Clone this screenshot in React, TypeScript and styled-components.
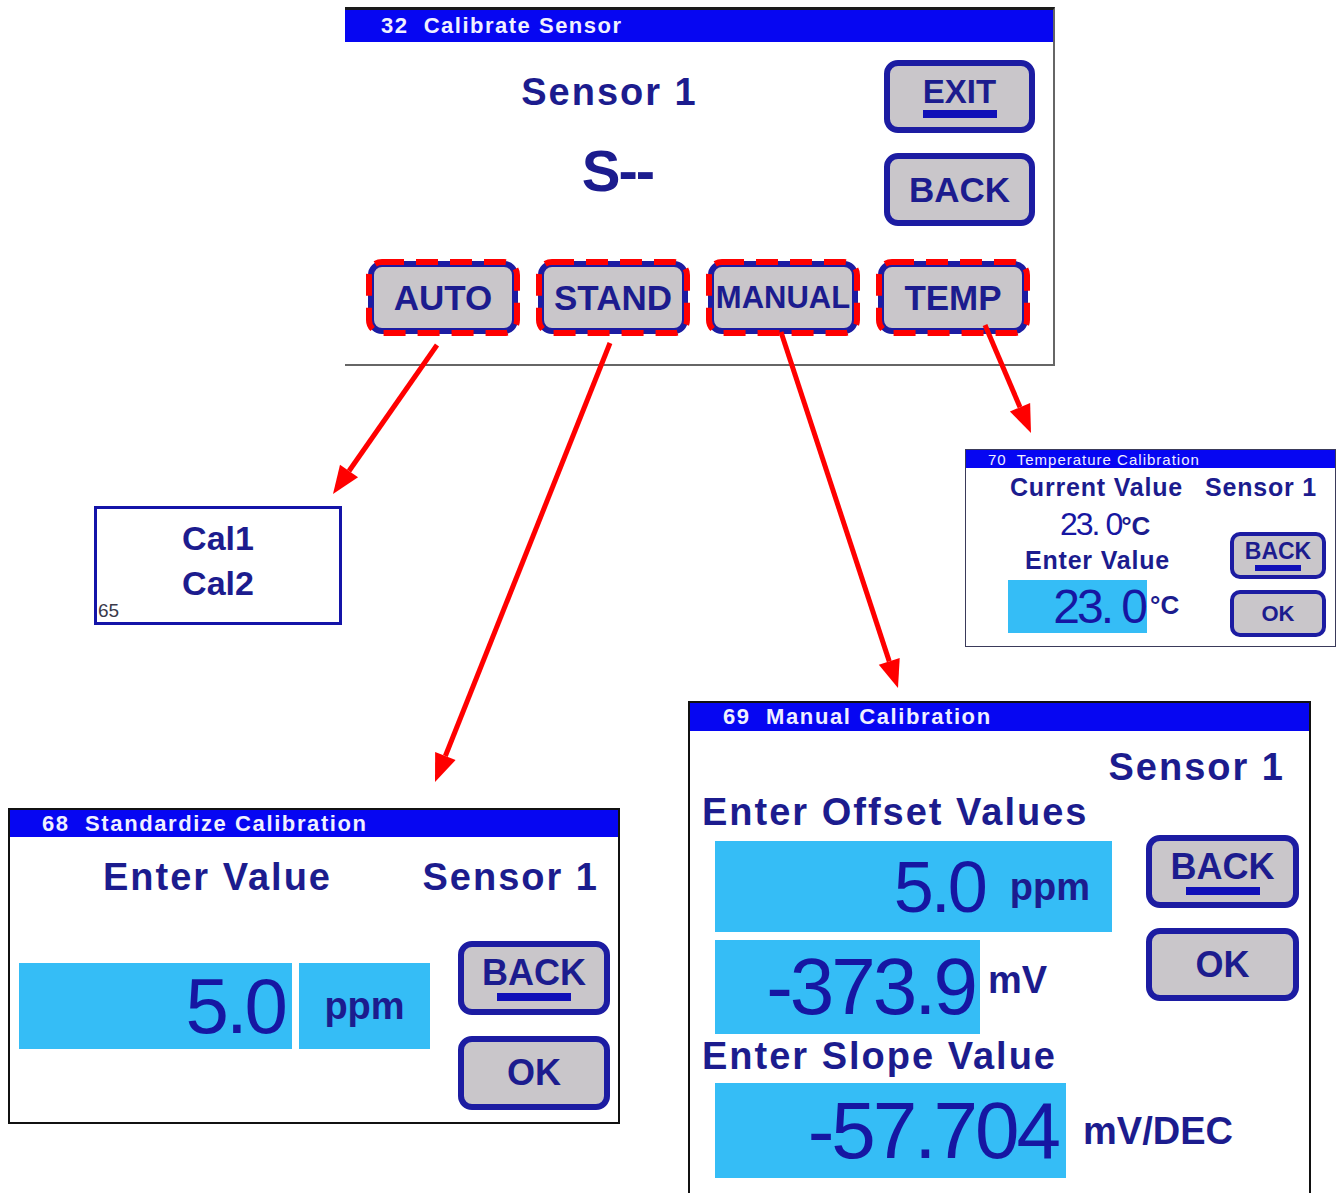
import React from 'react'
import styled, { createGlobalStyle } from 'styled-components'

const NAVY = '#1c1c8e'
const DIGIT = '#1616a2'
const BAR = '#0606f2'
const CYAN = '#35bdf6'
const KEY_EDGE = '#1c1ca2'
const KEY_FACE = '#c9c6ca'

const GlobalStyle = createGlobalStyle`
  html, body { margin: 0; padding: 0; background: #fff; }
  body { font-family: 'Liberation Sans', Arial, sans-serif; color: ${NAVY}; }
`

const Canvas = styled.div`
  position: relative;
  width: 1336px;
  height: 1193px;
  overflow: hidden;
  background: #fff;
`

// each screen is a node of the diagram, placed where it sits on the sheet
const Screen = styled.section<{ $x: number; $y: number; $w: number; $h: number }>`
  position: absolute;
  left: ${(p) => p.$x}px;
  top: ${(p) => p.$y}px;
  width: ${(p) => p.$w}px;
  height: ${(p) => p.$h}px;
  box-sizing: border-box;
  display: flex;
  flex-direction: column;
  background: #fff;
`

const MainScreen = styled(Screen)`
  border-top: 3px solid #1a1a1a;
  border-right: 2px solid #666;
  border-bottom: 2px solid #666;
`

const CalScreen = styled(Screen)`
  border: 3px solid #1414a8;
  align-items: center;
  padding-top: 7px;
`

const TempScreen = styled(Screen)`
  border: 1px solid #3a3a5a;
`

const BoxedScreen = styled(Screen)<{ $open?: boolean }>`
  border: 2px solid #111;
  border-bottom: ${(p) => (p.$open ? 'none' : '2px solid #111')};
`

const TitleBar = styled.header<{ $h: number; $fs: number; $pad: number; $ls: number; $bold?: boolean }>`
  flex: none;
  height: ${(p) => p.$h}px;
  background: ${BAR};
  color: #f0f0ff;
  font-size: ${(p) => p.$fs}px;
  font-weight: ${(p) => (p.$bold ? 700 : 400)};
  letter-spacing: ${(p) => p.$ls}px;
  padding-left: ${(p) => p.$pad}px;
  display: flex;
  align-items: center;
  white-space: pre;
  line-height: 1;
`

const Label = styled.div<{ $fs: number; $ls?: number }>`
  font-weight: 700;
  font-size: ${(p) => p.$fs}px;
  letter-spacing: ${(p) => p.$ls ?? 0}px;
  line-height: 1;
  white-space: nowrap;
`

const Readout = styled.span<{ $fs: number; $ls?: number }>`
  font-weight: 400;
  font-size: ${(p) => p.$fs}px;
  letter-spacing: ${(p) => p.$ls ?? -3}px;
  line-height: 1;
  white-space: pre;
  color: ${DIGIT};
`

const Key = styled.div<{ $w: number; $h: number; $fs: number; $edge?: number }>`
  position: relative;
  flex: none;
  width: ${(p) => p.$w}px;
  height: ${(p) => p.$h}px;
  box-sizing: border-box;
  border: ${(p) => p.$edge ?? 6}px solid ${KEY_EDGE};
  border-radius: ${(p) => ((p.$edge ?? 6) > 4 ? 14 : 10)}px;
  background: ${KEY_FACE};
  display: flex;
  flex-direction: column;
  align-items: center;
  justify-content: center;
  font-weight: 700;
  font-size: ${(p) => p.$fs}px;
  line-height: 1;
  color: ${NAVY};
  white-space: nowrap;
`

const Underline = styled.span<{ $w: number; $h?: number }>`
  display: block;
  width: ${(p) => p.$w}px;
  height: ${(p) => p.$h ?? 8}px;
  margin-top: 2px;
  background: #1010b8;
`

const KeyStack = styled.div<{ $gap: number; $top?: number }>`
  display: flex;
  flex-direction: column;
  gap: ${(p) => p.$gap}px;
  margin-left: auto;
  margin-top: ${(p) => p.$top ?? 0}px;
`

const DashOverlay = styled.svg`
  position: absolute;
  left: -9px;
  top: -9px;
  overflow: visible;
  pointer-events: none;
`

const Highlight = ({ w, h }: { w: number; h: number }) => (
  <DashOverlay width={w + 6} height={h + 6}>
    <rect
      x={4}
      y={4}
      width={w - 2}
      height={h - 2}
      rx={13}
      fill='none'
      stroke='#ff0000'
      strokeWidth={6}
      strokeDasharray='22 12'
    />
  </DashOverlay>
)

/* ---------- 32 Calibrate Sensor ---------- */

const MainBody = styled.div`
  display: flex;
  flex-direction: column;
  padding: 18px 18px 0 0;
`

const MainTop = styled.div`
  display: flex;
`

const CenterCol = styled.div`
  flex: 1;
  display: flex;
  flex-direction: column;
  align-items: center;
  padding-top: 13px;
  gap: 31px;
`

const SensorTitle = styled(Label)`
  margin-right: 10px;
`

const Mode = styled.div`
  font-weight: 700;
  font-size: 58px;
  letter-spacing: -2px;
  line-height: 1;
  margin-left: 6px;
`

const KeyRow = styled.div`
  display: flex;
  gap: 20px;
  margin-top: 35px;
  padding-left: 23px;
`

/* ---------- 65 auto ---------- */

const CalLine = styled(Label)`
  font-size: 34px;
  line-height: 45px;
`

const ScreenId = styled.span`
  position: absolute;
  left: 1px;
  bottom: 2px;
  font-size: 19px;
  line-height: 1;
  color: #3a3a4a;
`

/* ---------- 70 Temperature ---------- */

const HeaderRow = styled.div<{ $top: number; $left: number; $right?: number; $gap?: number }>`
  display: flex;
  justify-content: ${(p) => (p.$gap ? 'flex-start' : 'space-between')};
  gap: ${(p) => p.$gap ?? 0}px;
  margin-top: ${(p) => p.$top}px;
  padding-left: ${(p) => p.$left}px;
  padding-right: ${(p) => p.$right ?? 0}px;
`

const TempMain = styled.div`
  display: flex;
  padding-right: 9px;
`

const TempLeft = styled.div`
  display: flex;
  flex-direction: column;
  align-items: flex-start;
`

const Reading = styled.div`
  display: flex;
  align-items: baseline;
  margin: 8px 0 0 94px;
`

const Unit = styled.span<{ $fs: number }>`
  font-weight: 700;
  font-size: ${(p) => p.$fs}px;
  line-height: 1;
  white-space: nowrap;
`

const EntryRow = styled.div<{ $top: number; $left: number }>`
  display: flex;
  align-items: flex-start;
  margin-top: ${(p) => p.$top}px;
  margin-left: ${(p) => p.$left}px;
`

const Field = styled.div<{ $w: number; $h: number; $pad?: number; $center?: boolean }>`
  flex: none;
  width: ${(p) => p.$w}px;
  height: ${(p) => p.$h}px;
  box-sizing: border-box;
  background: ${CYAN};
  display: flex;
  align-items: center;
  justify-content: ${(p) => (p.$center ? 'center' : 'flex-end')};
  padding-right: ${(p) => p.$pad ?? 0}px;
  color: ${NAVY};
`

/* ---------- 68 Standardize ---------- */

const StdMain = styled.div`
  display: flex;
  align-items: flex-start;
  margin-top: 45px;
  padding: 0 8px 0 9px;
`

const FieldGroup = styled.div`
  display: flex;
  gap: 7px;
  margin-top: 22px;
`

/* ---------- 69 Manual ---------- */

const ManualBody = styled.div`
  display: flex;
  flex-direction: column;
  padding: 0 10px 0 12px;
`

const SensorLine = styled(Label)`
  align-self: flex-end;
  margin-top: 17px;
  padding-right: 14px;
`

const Heading = styled(Label)<{ $top: number }>`
  margin-top: ${(p) => p.$top}px;
`

const ManualMain = styled.div`
  display: flex;
  margin-top: 4px;
`

const ManualLeft = styled.div`
  flex: none;
  width: 420px;
  display: flex;
  flex-direction: column;
  padding-top: 6px;
`

const SideUnit = styled(Unit)<{ $left: number; $top?: number }>`
  margin-left: ${(p) => p.$left}px;
  align-self: ${(p) => (p.$top === undefined ? 'center' : 'flex-start')};
  margin-top: ${(p) => p.$top ?? 0}px;
`

/* ---------- arrows ---------- */

const ArrowLayer = styled.svg`
  position: absolute;
  left: 0;
  top: 0;
  pointer-events: none;
`

const arrows = [
  { x1: 437, y1: 345, x2: 333, y2: 494 },
  { x1: 610, y1: 343, x2: 435, y2: 782 },
  { x1: 781, y1: 332, x2: 898, y2: 688 },
  { x1: 985, y1: 325, x2: 1031, y2: 433 },
]

const Arrow = ({ x1, y1, x2, y2 }: { x1: number; y1: number; x2: number; y2: number }) => {
  const a = Math.atan2(y2 - y1, x2 - x1)
  const len = 28
  const half = 11
  const bx = x2 - len * Math.cos(a)
  const by = y2 - len * Math.sin(a)
  const px = -Math.sin(a) * half
  const py = Math.cos(a) * half
  return (
    <g>
      <line x1={x1} y1={y1} x2={bx} y2={by} stroke='#ff0000' strokeWidth={5} />
      <polygon
        points={`${x2},${y2} ${bx + px},${by + py} ${bx - px},${by - py}`}
        fill='#ff0000'
      />
    </g>
  )
}

export default function App() {
  return (
    <Canvas>
      <GlobalStyle />

      <MainScreen $x={345} $y={7} $w={710} $h={359}>
        <TitleBar $h={32} $fs={22} $pad={36} $ls={1.5} $bold>
          32  Calibrate Sensor
        </TitleBar>
        <MainBody>
          <MainTop>
            <CenterCol>
              <SensorTitle $fs={38} $ls={2}>Sensor 1</SensorTitle>
              <Mode>S--</Mode>
            </CenterCol>
            <KeyStack $gap={20}>
              <Key $w={151} $h={73} $fs={33}>
                EXIT
                <Underline $w={74} />
              </Key>
              <Key $w={151} $h={73} $fs={35}>BACK</Key>
            </KeyStack>
          </MainTop>
          <KeyRow>
            {['AUTO', 'STAND', 'MANUAL', 'TEMP'].map((t) => (
              <Key key={t} $w={150} $h={73} $fs={t === 'MANUAL' ? 31 : 35}>
                {t}
                <Highlight w={150} h={73} />
              </Key>
            ))}
          </KeyRow>
        </MainBody>
      </MainScreen>

      <CalScreen $x={94} $y={506} $w={248} $h={119}>
        <CalLine $fs={34}>Cal1</CalLine>
        <CalLine $fs={34}>Cal2</CalLine>
        <ScreenId>65</ScreenId>
      </CalScreen>

      <TempScreen $x={965} $y={449} $w={371} $h={198}>
        <TitleBar $h={18} $fs={15} $pad={22} $ls={1}>
          70  Temperature Calibration
        </TitleBar>
        <HeaderRow $top={7} $left={44} $gap={22}>
          <Label $fs={25} $ls={0.8}>Current Value</Label>
          <Label $fs={25} $ls={0.8}>Sensor 1</Label>
        </HeaderRow>
        <TempMain>
          <TempLeft>
            <Reading>
              <Readout $fs={32} $ls={-2}>23. 0</Readout>
              <Unit $fs={26}>°C</Unit>
            </Reading>
            <Heading $fs={25} $ls={0.8} $top={8} style={{ marginLeft: 59 }}>
              Enter Value
            </Heading>
            <EntryRow $top={7} $left={42}>
              <Field $w={139} $h={53} $pad={2}>
                <Readout $fs={48} $ls={-3}>23. 0</Readout>
              </Field>
              <SideUnit $fs={26} $left={3} $top={12}>°C</SideUnit>
            </EntryRow>
          </TempLeft>
          <KeyStack $gap={11} $top={32}>
            <Key $w={96} $h={47} $fs={23} $edge={4}>
              BACK
              <Underline $w={46} $h={6} />
            </Key>
            <Key $w={96} $h={47} $fs={22} $edge={4}>OK</Key>
          </KeyStack>
        </TempMain>
      </TempScreen>

      <BoxedScreen $x={8} $y={808} $w={612} $h={316}>
        <TitleBar $h={27} $fs={22} $pad={32} $ls={1.6} $bold>
          68  Standardize Calibration
        </TitleBar>
        <HeaderRow $top={21} $left={93} $right={19}>
          <Label $fs={38} $ls={2}>Enter Value</Label>
          <Label $fs={38} $ls={2}>Sensor 1</Label>
        </HeaderRow>
        <StdMain>
          <FieldGroup>
            <Field $w={273} $h={86} $pad={7}>
              <Readout $fs={78}>5.0</Readout>
            </Field>
            <Field $w={131} $h={86} $center>
              <Unit $fs={38}>ppm</Unit>
            </Field>
          </FieldGroup>
          <KeyStack $gap={21}>
            <Key $w={152} $h={74} $fs={36}>
              BACK
              <Underline $w={74} />
            </Key>
            <Key $w={152} $h={74} $fs={36}>OK</Key>
          </KeyStack>
        </StdMain>
      </BoxedScreen>

      <BoxedScreen $x={688} $y={701} $w={623} $h={494} $open>
        <TitleBar $h={28} $fs={22} $pad={33} $ls={1.6} $bold>
          69  Manual Calibration
        </TitleBar>
        <ManualBody>
          <SensorLine $fs={38} $ls={2}>Sensor 1</SensorLine>
          <Heading $fs={38} $ls={2} $top={7}>Enter Offset Values</Heading>
          <ManualMain>
            <ManualLeft>
              <EntryRow $top={0} $left={13}>
                <Field $w={397} $h={91} $pad={22}>
                  <Readout $fs={72}>5.0</Readout>
                  <Unit $fs={38} style={{ marginLeft: 25 }}>ppm</Unit>
                </Field>
              </EntryRow>
              <EntryRow $top={8} $left={13}>
                <Field $w={265} $h={94} $pad={5}>
                  <Readout $fs={80}>-373.9</Readout>
                </Field>
                <SideUnit $fs={38} $left={8} $top={21}>mV</SideUnit>
              </EntryRow>
              <Heading $fs={38} $ls={2} $top={3}>Enter Slope Value</Heading>
              <EntryRow $top={8} $left={13}>
                <Field $w={351} $h={95} $pad={8}>
                  <Readout $fs={80}>-57.704</Readout>
                </Field>
                <SideUnit $fs={38} $left={17}>mV/DEC</SideUnit>
              </EntryRow>
            </ManualLeft>
            <KeyStack $gap={20}>
              <Key $w={153} $h={73} $fs={36}>
                BACK
                <Underline $w={74} />
              </Key>
              <Key $w={153} $h={73} $fs={36}>OK</Key>
            </KeyStack>
          </ManualMain>
        </ManualBody>
      </BoxedScreen>

      <ArrowLayer width={1336} height={1193}>
        {arrows.map((a, i) => (
          <Arrow key={i} {...a} />
        ))}
      </ArrowLayer>
    </Canvas>
  )
}
